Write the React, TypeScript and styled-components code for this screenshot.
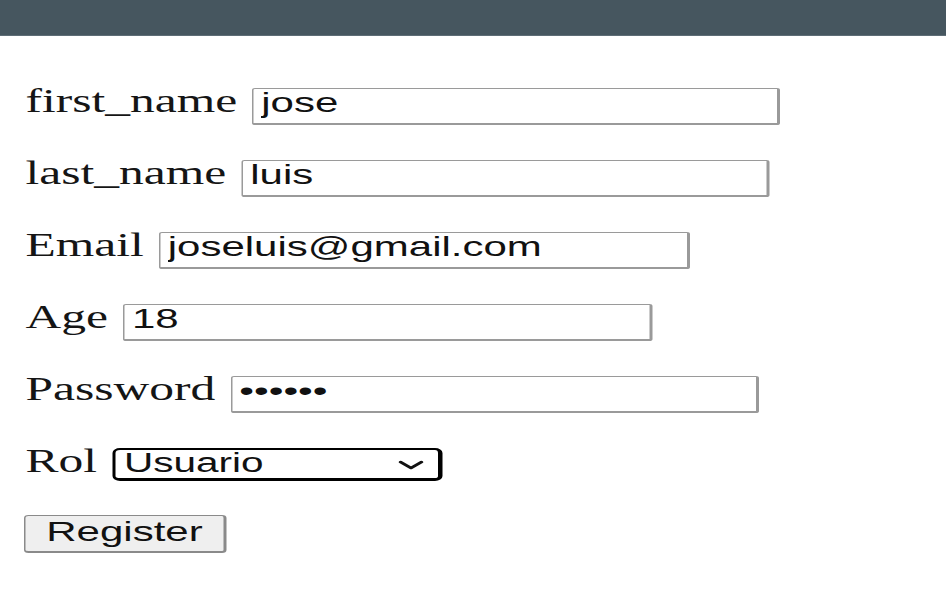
import React from "react";
import styled, { createGlobalStyle } from "styled-components";

const Global = createGlobalStyle`
  html, body { margin: 0; padding: 0; background: #ffffff; }
  body { width: 946px; height: 590px; overflow: hidden; }
`;

const Page = styled.div`
  width: 946px;
  height: 590px;
  background: #ffffff;
  overflow: hidden;
`;

const Header = styled.header`
  height: 35px;
  background: #46565f;
  border-bottom: 1px solid #5e6d76;
`;

/* The screenshot is stretched horizontally; the whole form is scaled on X */
const Form = styled.form`
  display: flex;
  flex-direction: column;
  gap: 35px;
  padding: 51px 0 0 17px;
  transform: scaleX(1.5);
  transform-origin: top left;
  width: 600px;
`;

const Row = styled.div<{ $h: number }>`
  display: flex;
  align-items: baseline;
  gap: 10px;
  height: ${(p) => p.$h}px;
`;

const Label = styled.label`
  font-family: "Liberation Serif", "Times New Roman", serif;
  font-size: 33px;
  line-height: 28px;
  color: #151515;
  white-space: nowrap;
`;

const TextInput = styled.input<{ $w: number }>`
  box-sizing: border-box;
  width: ${(p) => p.$w}px;
  height: 37px;
  padding: 0 5px 5px 5px;
  margin: 0;
  font-family: "Liberation Sans", Arial, sans-serif;
  font-size: 28px;
  color: #111;
  background: #fff;
  border: 1px solid #9a9a9a;
  border-right-width: 2px;
  border-bottom-width: 2px;
  border-radius: 2px;
  outline: none;
`;

const SelectWrap = styled.div`
  position: relative;
  display: inline-block;
`;

const Select = styled.select`
  box-sizing: border-box;
  appearance: none;
  -webkit-appearance: none;
  width: 220px;
  height: 33px;
  margin: 0;
  padding: 0 30px 4px 6px;
  font-family: "Liberation Sans", Arial, sans-serif;
  font-size: 27px;
  line-height: 26px;
  color: #111;
  background: #fff;
  border: 2px solid #000;
  border-right-width: 3px;
  border-bottom-width: 3px;
  border-radius: 5px;
  outline: none;
`;

const Chevron = styled.svg`
  position: absolute;
  right: 12px;
  top: 12px;
  width: 18px;
  height: 10px;
  pointer-events: none;
`;

const Button = styled.button`
  box-sizing: border-box;
  width: 135px;
  height: 38px;
  margin: 0 0 0 -1px;
  padding: 0 0 3px 0;
  font-family: "Liberation Sans", Arial, sans-serif;
  font-size: 28px;
  color: #111;
  background: #efefef;
  border: 1px solid #8a8a8a;
  border-right-width: 2px;
  border-bottom-width: 2px;
  border-radius: 3px;
  align-self: flex-start;
`;

const fields = [
  { label: "first_name", type: "text", value: "jose", w: 352 },
  { label: "last_name", type: "text", value: "luis", w: 352 },
  { label: "Email", type: "text", value: "joseluis@gmail.com", w: 354 },
  { label: "Age", type: "text", value: "18", w: 353 },
  { label: "Password", type: "password", value: "123456", w: 352 },
];

export default function App() {
  return (
    <Page>
      <Global />
      <Header />
      <Form onSubmit={(e) => e.preventDefault()}>
        {fields.map((f) => (
          <Row key={f.label} $h={37}>
            <Label>{f.label}</Label>
            <TextInput $w={f.w} type={f.type} value={f.value} readOnly />
          </Row>
        ))}
        <Row $h={33}>
          <Label>Rol</Label>
          <SelectWrap>
            <Select defaultValue="Usuario">
              <option>Usuario</option>
              <option>Admin</option>
            </Select>
            <Chevron viewBox="0 0 18 10">
              <path d="M2 2 L9 8 L16 2" fill="none" stroke="#111" strokeWidth="2.4" strokeLinecap="round" strokeLinejoin="round" />
            </Chevron>
          </SelectWrap>
        </Row>
        <Button type="submit">Register</Button>
      </Form>
    </Page>
  );
}
